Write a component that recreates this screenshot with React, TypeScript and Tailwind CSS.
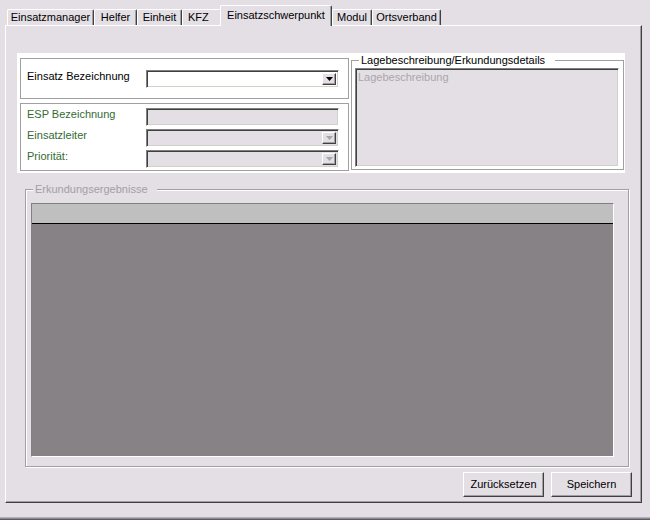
import React from "react";

const BG = "bg-[#e4dfe5]";

function Tab({ label, w, selected, left }: { label: string; w: string; selected?: boolean; left?: boolean }) {
  if (selected) {
    return (
      <div
        className={`relative z-10 -ml-[2px] -mb-px h-[21px] ${w} ${BG} flex items-center ${left ? "justify-start pl-[8px]" : "justify-center"} pb-[1px] border-t border-l border-r border-t-white border-l-white border-r-[#404040] rounded-t-[2px] shadow-[inset_-1px_0_0_#a0a0a0] text-[11px] text-black leading-[13px]`}
      >
        {label}
      </div>
    );
  }
  return (
    <div
      className={`h-[16px] ${w} flex items-center ${left ? "justify-start pl-[5px]" : "justify-center"} border-t border-l border-r border-t-white border-l-white border-r-[#404040] rounded-t-[2px] shadow-[inset_-1px_0_0_#a0a0a0] text-[11px] text-black leading-[13px]`}
    >
      {label}
    </div>
  );
}

function Combo({ disabled, arrow = true }: { disabled?: boolean; arrow?: boolean }) {
  return (
    <div
      className={`h-[18px] w-[193px] flex justify-end p-[2px] border border-t-[#808080] border-l-[#808080] border-b-white border-r-white shadow-[inset_1px_1px_0_#404040,inset_-1px_-1px_0_#d4d0c8] ${disabled ? "bg-[#e4dfe5]" : "bg-white"}`}
    >
      {arrow && (
        <div className="w-[14px] h-full bg-[#e4dfe5] flex items-center justify-center border border-t-white border-l-white border-b-[#404040] border-r-[#404040] shadow-[inset_-1px_-1px_0_#a0a0a0]">
          <svg width="7" height="4" viewBox="0 0 7 4">
            <path d="M0 0H7L3.5 4Z" fill={disabled ? "#a8a4a8" : "#000000"} />
          </svg>
        </div>
      )}
    </div>
  );
}

function Row({ label, green, children }: { label: string; green?: boolean; children: React.ReactNode }) {
  return (
    <div className="flex items-start">
      <div className={`w-[119px] leading-[13px] ${green ? "text-[#336b33]" : "text-black"}`}>{label}</div>
      {children}
    </div>
  );
}

function Button({ label }: { label: string }) {
  return (
    <div className="w-[81px] h-[25px] flex items-center justify-center text-black border border-t-white border-l-white border-b-[#404040] border-r-[#404040] shadow-[inset_-1px_-1px_0_#a0a0a0]">
      {label}
    </div>
  );
}

export default function App() {
  return (
    <div className={`w-[650px] h-[530px] ${BG} flex flex-col font-['Liberation_Sans',Arial,sans-serif] text-[11px] overflow-hidden`}>
      {/* Tabs */}
      <div className="h-[25px] flex items-end pl-[7px]">
        <Tab label="Einsatzmanager" w="w-[87px]" />
        <Tab label="Helfer" w="w-[43px]" />
        <Tab label="Einheit" w="w-[45px]" />
        <Tab label="KFZ" w="w-[40px]" left />
        <Tab label="Einsatzschwerpunkt" w="w-[112px]" selected />
        <Tab label="Modul" w="w-[40px]" />
        <Tab label="Ortsverband" w="w-[69px]" />
      </div>

      {/* Panel */}
      <div className="ml-[5px] w-[637px] h-[478px] flex flex-col border-t border-l border-r border-b border-t-white border-l-white border-r-[#404040] border-b-[#404040] shadow-[inset_-1px_-1px_0_#a0a0a0]">
        {/* white upper area */}
        <div className="ml-[11px] mt-[27px] w-[608px] h-[120px] bg-white flex pl-[3px] pt-[5px]">
          <div className="w-[329px] flex flex-col gap-[4px]">
            <div className="h-[41px] border border-[#a0a0a0] pl-[6px] pt-[11px]">
              <Row label="Einsatz Bezeichnung">
                <Combo />
              </Row>
            </div>
            <div className="h-[68px] border border-[#a0a0a0] pl-[6px] pt-[4px] flex flex-col gap-[3px]">
              <Row label="ESP Bezeichnung" green>
                <Combo disabled arrow={false} />
              </Row>
              <Row label="Einsatzleiter" green>
                <Combo disabled />
              </Row>
              <Row label="Priorität:" green>
                <Combo disabled />
              </Row>
            </div>
          </div>
          <div className="relative ml-[2px] mt-[2px] w-[273px] h-[110px] border border-[#a0a0a0] pl-[3px] pt-[7px]">
            <div className="absolute left-[7px] -top-[7px] pl-[2px] pr-[10px] bg-white text-black leading-[13px]">
              Lagebeschreibung/Erkundungsdetails
            </div>
            <div className="w-[264px] h-[99px] bg-[#e4dfe5] border border-t-[#808080] border-l-[#808080] border-b-white border-r-white shadow-[inset_1px_1px_0_#404040,inset_-1px_-1px_0_#d4d0c8] pl-[2px] pt-[2px] text-[#aaa6aa] leading-[13px]">
              Lagebeschreibung
            </div>
          </div>
        </div>

        {/* Erkundungsergebnisse */}
        <div className="relative ml-[19px] mt-[16px] w-[604px] h-[278px] border border-[#a0a0a0] shadow-[inset_1px_1px_0_#ffffff,1px_1px_0_#ffffff] pl-[5px] pt-[13px]">
          <div className="absolute left-[7px] -top-[7px] pl-[2px] pr-[9px] bg-[#e4dfe5] text-[#a29ea3] leading-[13px]">
            Erkundungsergebnisse
          </div>
          <div className="w-[583px] h-[254px] flex flex-col border border-t-[#808080] border-l-[#808080] border-b-white border-r-white">
            <div className="h-[20px] bg-[#c0bfc0] border-b border-black" />
            <div className="flex-1 bg-[#868286]" />
          </div>
        </div>

        {/* Buttons */}
        <div className="mt-[5px] flex justify-end gap-[7px] pr-[9px]">
          <Button label="Zurücksetzen" />
          <Button label="Speichern" />
        </div>
      </div>

      {/* bottom lines */}
      <div className="mt-[14px] h-px bg-[#b4b0b6]" />
      <div className="h-px bg-[#8e8a96]" />
      <div className="h-px bg-[#5c5a6a]" />
      <div className="flex-1 bg-white" />
    </div>
  );
}
